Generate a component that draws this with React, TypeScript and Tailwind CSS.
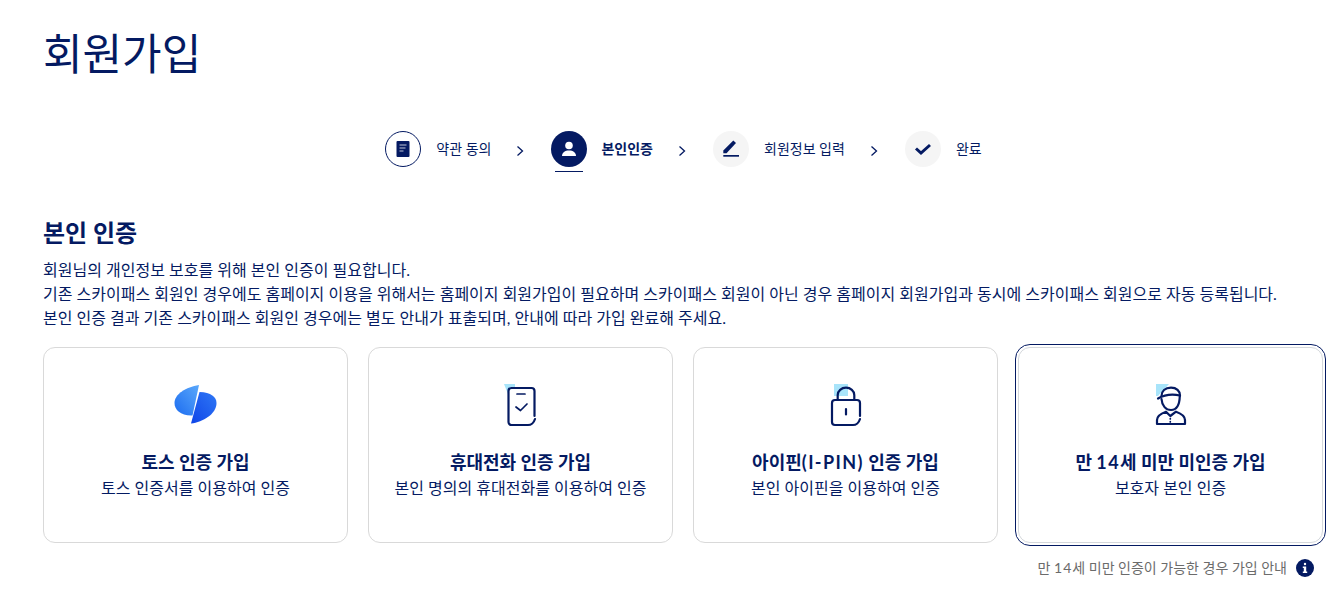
import type { ReactNode } from "react";

const NAVY = "#041a62";

function Arrow() {
    return (
        <svg width="18" height="18" viewBox="0 0 18 18" fill="none" stroke={NAVY} strokeWidth="1.300" className="mt-[4px] mr-[2px] shrink-0">
            <path d="M6.500 4.500 L11.500 9 L6.500 13.500" />
        </svg>
    );
}

function Step({ label, icon, variant }: { label: string; icon: ReactNode; variant: "done" | "active" | "todo" }) {
    const circle = {
        done: "border border-[#041a62] bg-white text-[#041a62]",
        active: "bg-[#041a62] text-white",
        todo: "bg-[#f5f5f5] text-[#041a62]",
    }[variant];

    return (
        <div className={`relative flex items-center ${variant === "active" ? "gap-[14px]" : "gap-[15px]"}`}>
            <div className={`w-9 h-9 rounded-full flex items-center justify-center shrink-0 ${circle}`}>{icon}</div>
            <span className={`text-[14px] leading-5 whitespace-nowrap text-[#041a62] ${variant === "active" ? "font-bold" : ""}`}>{label}</span>
            {variant === "active" && <div className="absolute left-[4px] top-[40px] w-7 h-px bg-[#041a62]" />}
        </div>
    );
}

function DocIcon() {
    return (
        <svg width="14" height="16" viewBox="0 0 14 16">
            <rect x="0.5" y="0" width="13" height="16" rx="1" fill={NAVY} />
            <path d="M3.500 4h7M3.500 7h6M3.500 10h4" stroke="#fff" strokeOpacity="0.75" strokeWidth="1" />
        </svg>
    );
}

function PersonIcon() {
    return (
        <svg width="18" height="18" viewBox="0 0 18 18" fill="#fff">
            <circle cx="9" cy="5.500" r="3.800" />
            <path d="M2 16 C2 12.500 5 10.500 9 10.500 C13 10.500 16 12.500 16 16 Z" />
        </svg>
    );
}

function EditIcon() {
    return (
        <svg width="18" height="18" viewBox="0 0 18 18" fill={NAVY}>
            <path d="M1.300 13.300 V10.500 L11.300 0.500 L14 3 L4.500 13.300 Z" />
            <rect x="1.300" y="15" width="15.700" height="1.700" />
        </svg>
    );
}

function CheckIcon() {
    return (
        <svg width="18" height="18" viewBox="0 0 18 18" fill="none" stroke={NAVY} strokeWidth="3">
            <path d="M2 8.500 L7 13 L16 5" />
        </svg>
    );
}

function InfoDot() {
    return (
        <svg width="18" height="18" viewBox="0 0 18 18">
            <circle cx="9" cy="9" r="9" fill={NAVY} />
            <rect x="7.800" y="3.800" width="2.400" height="2.400" rx="1.200" fill="#fff" />
            <path d="M6.800 7.500 H10.200 V12.500 H11.200 V14 H6.800 V12.500 H7.800 V9 H6.800 Z" fill="#fff" />
        </svg>
    );
}

function TossIcon() {
    return (
        <svg width="60" height="60" viewBox="0 0 60 60">
            <defs>
                <linearGradient id="tossA" x1="0" y1="1" x2="1" y2="0">
                    <stop offset="0" stopColor="#1c6cf0" />
                    <stop offset="1" stopColor="#5aa8fb" />
                </linearGradient>
                <linearGradient id="tossB" x1="0" y1="1" x2="1" y2="0">
                    <stop offset="0" stopColor="#0f45e8" />
                    <stop offset="1" stopColor="#2f78f5" />
                </linearGradient>
            </defs>
            <path d="M33 10 L26.500 40.500 C15 41 8.500 35 8.500 28 C8.500 19 20 12 33 10 Z" fill="url(#tossA)" />
            <path d="M33.500 17 C45 17.500 50.500 22 50.500 28 C50.500 39 37 47 25 48.500 Z" fill="url(#tossB)" />
        </svg>
    );
}

function PhoneIcon() {
    return (
        <svg width="60" height="60" viewBox="0 0 60 60" fill="none" stroke={NAVY} strokeWidth="2.200" strokeLinecap="round" strokeLinejoin="round">
            <path d="M13 9 H24 V13 H17 V19 Z" fill="#a8e4fa" stroke="none" />
            <path d="M43.500 41 V16 a3 3 0 0 0 -3 -3 H20.500 a3 3 0 0 0 -3 3 V47 a3 3 0 0 0 3 3 H37 C40 50 43 47.500 44 44" />
            <path d="M26 19 H34" strokeWidth="1.700" />
            <path d="M25 32 L29.500 35.500 L36 29" strokeWidth="1.700" />
        </svg>
    );
}

function LockIcon() {
    return (
        <svg width="60" height="60" viewBox="0 0 60 60" fill="none" stroke={NAVY} strokeWidth="2.200" strokeLinecap="round" strokeLinejoin="round">
            <rect x="18" y="9" width="14" height="12" fill="#a8e4fa" stroke="none" />
            <path d="M21.700 25 V20 a8.300 7.300 0 0 1 16.600 0 V25" />
            <path d="M44 41 V28 a3 3 0 0 0 -3 -3 H19 a3 3 0 0 0 -3 3 V47 a3 3 0 0 0 3 3 H37 C40 50 43 47.500 44 44" />
            <path d="M30 34 V39.500" />
        </svg>
    );
}

function KidIcon() {
    return (
        <svg width="60" height="60" viewBox="0 0 60 60" fill="none" stroke={NAVY} strokeWidth="2.200" strokeLinecap="round" strokeLinejoin="round">
            <path d="M15 9 H28 L17 21 H15 Z" fill="#a8e4fa" stroke="none" />
            <path d="M20.500 21 C20.500 16 24 12.700 30 12.700 C35.500 12.700 39 16 39 20.500" />
            <path d="M17 23.500 C23 20 32 19 39 20.500" />
            <path d="M20.500 24 C21 31 25 35 30 35 C35 35 38.500 31 38.800 21" />
            <path d="M16 49 V45 C16 41 20 38.500 25 36.700 L29.300 41 L35 36.700 C40 38.500 44 41 44 45 V49 Z" />
            <path d="M29.300 43.500 V44 M29.300 46.500 V47" strokeWidth="1.700" />
        </svg>
    );
}

function AuthCard({ icon, title, desc, selected = false }: { icon: ReactNode; title: ReactNode; desc: string; selected?: boolean }) {
    return (
        <div
            className={`flex-1 h-[196px] rounded-[12px] bg-white flex flex-col items-center border ${
                selected ? "border-[#d5d8dc] outline outline-1 outline-offset-2 outline-[#041a62]" : "border-[#d9d9d9]"
            }`}
        >
            <div className="h-[60px] mt-[27px] flex items-center justify-center">{icon}</div>
            <div className="mt-[15px] text-[18px] leading-6 font-bold text-[#041a62] whitespace-nowrap">{title}</div>
            <div className="mt-px text-[16px] leading-[26px] text-[#041a62] whitespace-nowrap">{desc}</div>
        </div>
    );
}

export default function App() {
    return (
        <div className="w-[1342px] h-[605px] overflow-hidden bg-white font-['Lato','Noto_Sans_CJK_KR',sans-serif]">
            <div className="pl-[43px] pr-[19px]">
                <h1 className="pt-[24px] text-[43px] leading-[60px] text-[#041a62]">회원가입</h1>

                <div className="mt-[47px] flex items-start justify-center h-[56px] pl-[1px]">
                    <div className="flex items-center h-9 gap-[20px]">
                        <Step label="약관 동의" variant="done" icon={<DocIcon />} />
                        <Arrow />
                        <Step label="본인인증" variant="active" icon={<PersonIcon />} />
                        <Arrow />
                        <Step label="회원정보 입력" variant="todo" icon={<EditIcon />} />
                        <Arrow />
                        <Step label="완료" variant="todo" icon={<CheckIcon />} />
                    </div>
                </div>

                <h2 className="mt-[30px] text-[24px] leading-8 font-bold text-[#041a62]">본인 인증</h2>
                <div className="mt-[9px] text-[16px] leading-[24px] text-[#041a62] whitespace-nowrap">
                    <p>회원님의 개인정보 보호를 위해 본인 인증이 필요합니다.</p>
                    <p>기존 스카이패스 회원인 경우에도 홈페이지 이용을 위해서는 홈페이지 회원가입이 필요하며 스카이패스 회원이 아닌 경우 홈페이지 회원가입과 동시에 스카이패스 회원으로 자동 등록됩니다.</p>
                    <p>본인 인증 결과 기존 스카이패스 회원인 경우에는 별도 안내가 표출되며, 안내에 따라 가입 완료해 주세요.</p>
                </div>

                <div className="mt-[17px] flex gap-[20px]">
                    <AuthCard icon={<TossIcon />} title="토스 인증 가입" desc="토스 인증서를 이용하여 인증" />
                    <AuthCard icon={<PhoneIcon />} title="휴대전화 인증 가입" desc="본인 명의의 휴대전화를 이용하여 인증" />
                    <AuthCard
                        icon={<LockIcon />}
                        title={<>아이핀<span className="tracking-[1.400px]">(I-PIN)</span> 인증 가입</>}
                        desc="본인 아이핀을 이용하여 인증"
                    />
                    <AuthCard
                        icon={<KidIcon />}
                        title={<>만 <span className="tracking-[1.400px]">14</span>세 미만 미인증 가입</>}
                        desc="보호자 본인 인증"
                        selected
                    />
                </div>

                <div className="mt-[15px] flex items-center justify-end gap-[9px] pr-[9px]">
                    <span className="text-[14px] leading-5 text-[#6b6b6b]">
                        만 <span className="tracking-[1px]">14</span>세 미만 인증이 가능한 경우 가입 안내
                    </span>
                    <InfoDot />
                </div>
            </div>
        </div>
    );
}
